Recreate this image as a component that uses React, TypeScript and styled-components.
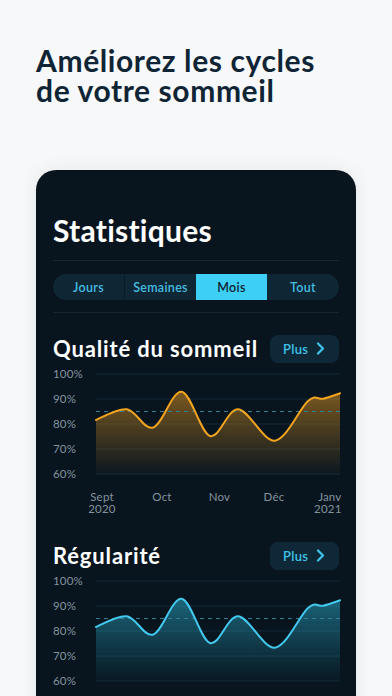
import React from "react";
import styled, { createGlobalStyle } from "styled-components";

const Global = createGlobalStyle`
  html, body { margin: 0; padding: 0; background: #f7f8f9; }
  * { box-sizing: border-box; }
`;

const Page = styled.div`
  width: 392px;
  height: 696px;
  overflow: hidden;
  background: #f7f8f9;
  font-family: "Lato", "Open Sans", sans-serif;
`;

const Headline = styled.h1`
  margin: 45px 0 0 36px;
  width: 300px;
  font-size: 30px;
  line-height: 30px;
  font-weight: 700;
  color: #0f2535;
  letter-spacing: 0.6px;
`;

const Card = styled.div`
  margin: 65px 36px 0;
  padding: 42px 17px 40px;
  background: #08151f;
  border-radius: 20px;
  box-shadow: 0 0 18px rgba(8, 21, 31, 0.08);
  display: flex;
  flex-direction: column;
`;

const CardTitle = styled.h2`
  margin: 0;
  font-size: 30px;
  line-height: 36px;
  font-weight: 700;
  letter-spacing: 0.25px;
  color: #ffffff;
`;

const Divider = styled.div<{ $gap: number }>`
  height: 1px;
  margin-top: ${(p) => p.$gap}px;
  background: #17262f;
`;

const Tabs = styled.div`
  margin-top: 13px;
  height: 26px;
  border-radius: 13px;
  overflow: hidden;
  display: grid;
  grid-template-columns: 71fr 72fr 71fr 72fr;
  background: #0f2634;
`;

const Tab = styled.div<{ $active?: boolean; $sep?: boolean }>`
  display: flex;
  align-items: center;
  justify-content: center;
  font-size: 12.5px;
  font-weight: 600;
  letter-spacing: 0.3px;
  color: ${(p) => (p.$active ? "#0c2230" : "#45bde0")};
  background: ${(p) => (p.$active ? "#3dcff5" : "transparent")};
  border-left: ${(p) => (p.$sep ? "1px solid #0a1b25" : "none")};
`;

const Section = styled.section<{ $gap: number }>`
  margin-top: ${(p) => p.$gap}px;
  display: flex;
  flex-direction: column;
`;

const SectionHeader = styled.div`
  height: 29px;
  display: flex;
  align-items: center;
  justify-content: space-between;
`;

const SectionTitle = styled.h3`
  margin: 0;
  font-size: 22px;
  line-height: 29px;
  font-weight: 700;
  letter-spacing: 0.85px;
  color: #ffffff;
`;

const PlusButton = styled.button`
  width: 69px;
  height: 28px;
  border: none;
  border-radius: 8px;
  background: #0f2838;
  color: #3ec4ea;
  font-family: inherit;
  font-size: 13px;
  font-weight: 600;
  letter-spacing: 0.3px;
  display: flex;
  align-items: center;
  gap: 8px;
  padding: 0 0 0 13px;
`;

const ChartSvg = styled.svg`
  display: block;
  overflow: visible;
  margin-top: 1px;
`;

type Pt = [number, number];

const curve: Pt[] = [
  [43, 56],
  [73.7, 45.3],
  [100.3, 63.5],
  [128.7, 27.7],
  [157, 72],
  [185.3, 45.3],
  [222, 76.7],
  [255, 37],
  [270.3, 34.7],
  [287, 29.3],
];

function smoothPath(pts: Pt[]): string {
  let d = `M${pts[0][0]},${pts[0][1]}`;
  for (let i = 0; i < pts.length - 1; i++) {
    const p0 = pts[i - 1] || pts[i];
    const p1 = pts[i];
    const p2 = pts[i + 1];
    const p3 = pts[i + 2] || p2;
    const c1x = p1[0] + (p2[0] - p0[0]) / 6;
    const c1y = p1[1] + (p2[1] - p0[1]) / 6;
    const c2x = p2[0] - (p3[0] - p1[0]) / 6;
    const c2y = p2[1] - (p3[1] - p1[1]) / 6;
    d += ` C${c1x.toFixed(1)},${c1y.toFixed(1)} ${c2x.toFixed(1)},${c2y.toFixed(1)} ${p2[0]},${p2[1]}`;
  }
  return d;
}

const linePath = smoothPath(curve);
const areaPath = `${linePath} L287,110 L43,110 Z`;

const yLabels = ["100%", "90%", "80%", "70%", "60%"];
const xLabels: { x: number; a: string; b?: string; anchor?: "middle" | "end" }[] = [
  { x: 49, a: "Sept", b: "2020" },
  { x: 109, a: "Oct" },
  { x: 166.5, a: "Nov" },
  { x: 221, a: "Déc" },
  { x: 288.5, a: "Janv", b: "2021", anchor: "end" },
];

const Chart: React.FC<{ id: string; stroke: string; fill: string; withX?: boolean }> = ({
  id,
  stroke,
  fill,
  withX,
}) => (
  <ChartSvg width={286} height={withX ? 152 : 120} viewBox={`0 0 286 ${withX ? 152 : 120}`}>
    <defs>
      <linearGradient id={id} x1="0" y1="27" x2="0" y2="110" gradientUnits="userSpaceOnUse">
        <stop offset="0" stopColor={fill} stopOpacity="0.55" />
        <stop offset="1" stopColor={fill} stopOpacity="0.02" />
      </linearGradient>
    </defs>
    {yLabels.map((l, i) => (
      <g key={l}>
        <line x1={43} x2={287} y1={10 + i * 25} y2={10 + i * 25} stroke="#132a37" strokeWidth={1} />
        <text
          x={0}
          y={14 + i * 25}
          fill="#83939d"
          fontSize={11.5}
          letterSpacing={0.2}
          fontFamily="Lato, sans-serif"
        >
          {l}
        </text>
      </g>
    ))}
    <path d={areaPath} fill={`url(#${id})`} />
    <line x1={43} x2={287} y1={47.5} y2={47.5} stroke="#2f7f93" strokeWidth={1} strokeDasharray="4 4" />
    <path d={linePath} fill="none" stroke={stroke} strokeWidth={2} strokeLinecap="round" />
    {withX &&
      xLabels.map((l) => (
        <text
          key={l.a}
          x={l.x}
          y={137}
          fill="#83939d"
          fontSize={11.5}
          letterSpacing={0.2}
          fontFamily="Lato, sans-serif"
          textAnchor={l.anchor || "middle"}
        >
          <tspan x={l.x} y={137}>
            {l.a}
          </tspan>
          {l.b && (
            <tspan x={l.x} y={149}>
              {l.b}
            </tspan>
          )}
        </text>
      ))}
  </ChartSvg>
);

const Chevron = () => (
  <svg width="9" height="13" viewBox="0 0 9 13">
    <path d="M2 1.5 L7 6.5 L2 11.5" fill="none" stroke="#3ec4ea" strokeWidth="2.2" strokeLinecap="round" strokeLinejoin="round" />
  </svg>
);

export default function App() {
  return (
    <Page>
      <Global />
      <Headline>Améliorez les cycles de votre sommeil</Headline>
      <Card>
        <CardTitle>Statistiques</CardTitle>
        <Divider $gap={12} />
        <Tabs>
          <Tab>Jours</Tab>
          <Tab $sep>Semaines</Tab>
          <Tab $active>Mois</Tab>
          <Tab>Tout</Tab>
        </Tabs>
        <Divider $gap={12} />
        <Section $gap={21}>
          <SectionHeader>
            <SectionTitle>Qualité du sommeil</SectionTitle>
            <PlusButton>
              Plus <Chevron />
            </PlusButton>
          </SectionHeader>
          <Chart id="gOrange" stroke="#f2a41f" fill="#d99020" withX />
        </Section>
        <Section $gap={25}>
          <SectionHeader>
            <SectionTitle>Régularité</SectionTitle>
            <PlusButton>
              Plus <Chevron />
            </PlusButton>
          </SectionHeader>
          <Chart id="gCyan" stroke="#43c9ee" fill="#2aa6c4" />
        </Section>
      </Card>
    </Page>
  );
}
